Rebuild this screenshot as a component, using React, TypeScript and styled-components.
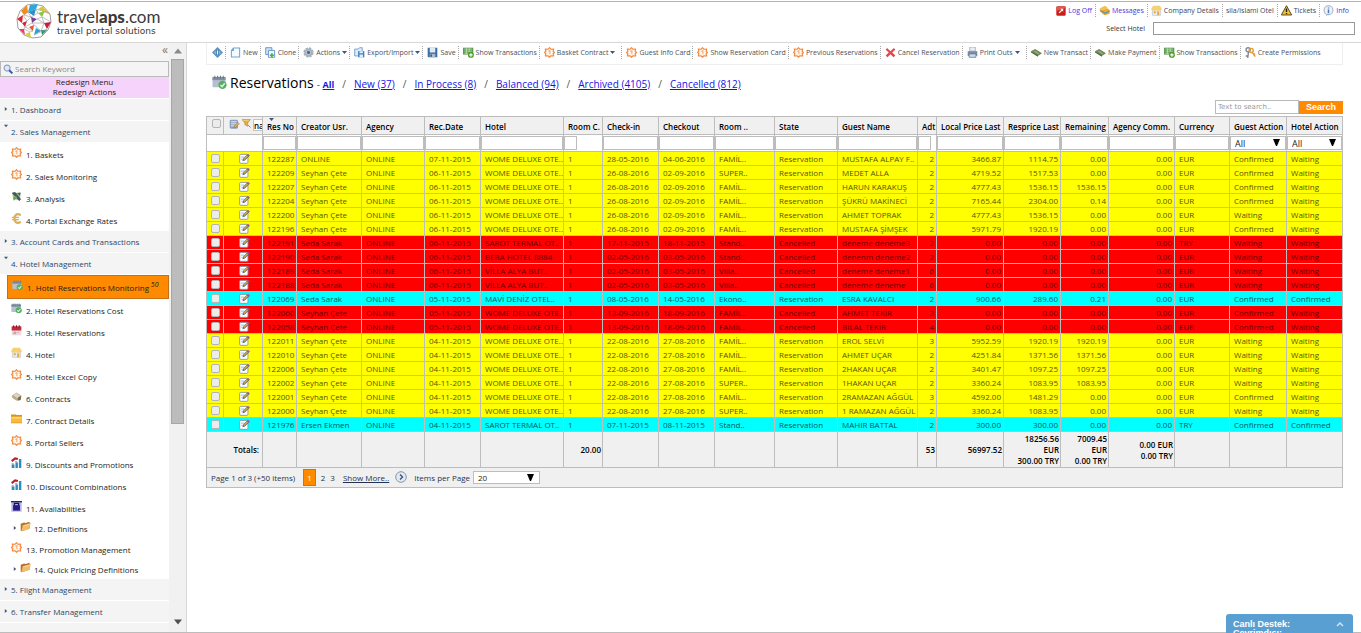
import React from 'react';
import styled, { createGlobalStyle, css } from 'styled-components';

const GlobalStyle = createGlobalStyle`
  * { box-sizing: border-box; }
  html, body, #root { height: 100%; margin: 0; }
  body {
    overflow: hidden;
    background: #fff;
    color: #000;
    font-family: 'Open Sans', 'Noto Sans', sans-serif;
    font-size: 8px;
    line-height: 11px;
  }
  button, input, select { font-family: inherit; margin: 0; }
  button { cursor: pointer; }
`;

/* ---------- icons ---------- */

type IconName =
  | 'gear' | 'analysis' | 'euro' | 'calendar' | 'redCalendar' | 'hotel' | 'contract' | 'folder'
  | 'chart' | 'lock' | 'openFolder' | 'nav' | 'page' | 'clone' | 'cog' | 'export' | 'save'
  | 'transactions' | 'cancel' | 'printer' | 'money' | 'keys' | 'logoff' | 'message' | 'warning'
  | 'info' | 'edit' | 'filter' | 'columns' | 'search';

const drawings: Record<IconName, React.ReactNode> = {
  gear: (
    <g fill="none" stroke="#f58536" strokeWidth="1.5" strokeLinejoin="round">
      <path d="M8 .8 10.200 3.400 14.200 3 13.200 6.200 15.300 8 13.200 9.800 14.200 13 10.200 12.600 8 15.200 5.800 12.600 1.800 13 2.800 9.800 .7 8 2.800 6.200 1.800 3 5.800 3.400Z" fill="#fff6ee" />
      <path d="M6.300 6.200 8.600 5.300V10.600" stroke="#f9a566" />
    </g>
  ),
  analysis: (
    <g>
      <path d="M2 2 14 3 13 13 3 12Z" fill="#8fc77c" />
      <path d="M2 3 6 2 14 12 12 14Z" fill="#4a4f63" stroke="#4a4f63" />
      <path d="M9 3 14 2 13 7Z" fill="#55585f" />
      <path d="M3 10 7 7 9 9 4 14Z" fill="#6aa84f" />
    </g>
  ),
  euro: (
    <g fill="none" stroke="#dcb158" strokeLinecap="round">
      <path d="M13 2.500C8 0 5 4 5 8s3 8 8 5.500" strokeWidth="3.400" />
      <path d="M2 6.500H11M2 9.500H11" strokeWidth="1.800" />
    </g>
  ),
  calendar: (
    <g>
      <rect x="0.500" y="2" width="14" height="11" rx="1" fill="#b4c0ce" />
      <path d="M.5 2H14.500V5.500H.5Z" fill="#8291a3" />
      <path d="M3 .8V4M6 .8V4M9 .8V4M12 .8V4" stroke="#5f6d7c" />
      <circle cx="11.200" cy="10.600" r="4.400" fill="#57ad62" />
      <path d="M9 10.600 10.800 12.400 13.600 8.800" fill="none" stroke="#e3f6e3" strokeWidth="1.500" />
    </g>
  ),
  redCalendar: (
    <g>
      <rect x="1" y="2" width="14" height="13" fill="#e9dede" />
      <path d="M1 2H15V8H1Z" fill="#c22a3c" />
      <path d="M4 .5V4M8 .5V4M12 .5V4" stroke="#8e1525" strokeWidth="1.500" />
      <path d="M4 10H7V13H4ZM9 11H12" fill="#d5a0a5" stroke="#d5a0a5" />
    </g>
  ),
  hotel: (
    <g>
      <path d="M2 7H14V15H2Z" fill="#e9eef5" stroke="#b8c4d4" />
      <path d="M0 6 3 1H13L16 6 14 8H2Z" fill="#f7d070" />
      <path d="M4 9H7V12H4ZM9 9H12V15H9Z" fill="#e7a84a" />
    </g>
  ),
  contract: (
    <g>
      <path d="M1 7 8 2 15 7 14 12 8 14 2 10Z" fill="#b9aa90" />
      <path d="M3 6 8 3 13 7 9 10Z" fill="#ded4c0" />
      <path d="M10 10 15 7 14 13 10 14Z" fill="#77694f" />
    </g>
  ),
  folder: (
    <g>
      <path d="M0 2H7L8 3H16V15H0Z" fill="#d9931d" />
      <path d="M0 5H16V14H0Z" fill="#fbb93a" />
      <path d="M1 6H15V8H1Z" fill="#ffdc85" />
    </g>
  ),
  chart: (
    <g>
      <path d="M1 11H5V16H1ZM6.500 8H10V16H6.500ZM11.500 3H15V16H11.500Z" fill="#2c8dc0" />
      <path d="M1 6 6 2 10 3" fill="none" stroke="#b6202b" strokeWidth="3" />
      <path d="M1 10H4M6 7H9" stroke="#8a3544" />
    </g>
  ),
  lock: (
    <g>
      <rect x=".5" y=".5" width="15" height="15" fill="#b8b5dc" />
      <rect x="3" y="6" width="10" height="8" fill="#261a8c" />
      <path d="M5 6V3.500H11V6" fill="none" stroke="#15105c" strokeWidth="2" />
      <path d="M0 1H16" stroke="#2a2170" strokeWidth="2" />
    </g>
  ),
  openFolder: (
    <g>
      <path d="M1 4 6 2 8 3 14 1V11L3 15 1 14Z" fill="#b9742a" />
      <path d="M4 6 16 3 13 12 2 15Z" fill="#f0bd6c" />
      <path d="M5 7 14 5" stroke="#fbe2b4" />
    </g>
  ),
  nav: (
    <g>
      <path d="M8 0 16 8 8 16 0 8Z" fill="#5b8fbd" />
      <path d="M8 2.500 13.500 8 8 13.500 2.500 8Z" fill="#86b1d6" />
      <path d="M6.500 4H9.500V12H6.500Z" fill="#2d5f92" />
      <path d="M8 5V11" stroke="#fff" strokeWidth="1.400" />
    </g>
  ),
  page: <path d="M5 1.500H14V14.500H2V5ZM5 1.500V5H2" fill="#f5fafe" stroke="#6fa5d6" strokeWidth="1.500" />,
  clone: (
    <g strokeWidth="1.300">
      <path d="M1 1H10V11H1Z" fill="#cfe3f4" stroke="#5b93c6" />
      <path d="M5 5H14V15H5Z" fill="#f2f8fd" stroke="#5b93c6" />
      <path d="M7 12H13M10 9V15" stroke="#4caf50" strokeWidth="2.500" />
    </g>
  ),
  cog: (
    <g fill="none">
      <circle cx="8" cy="8" r="6" stroke="#a6b0bd" strokeWidth="3" strokeDasharray="3.200 1.500" />
      <circle cx="8" cy="8" r="4.500" stroke="#a4afbd" strokeWidth="3" />
      <circle cx="8" cy="8" r="2.400" fill="#4a658c" />
    </g>
  ),
  export: (
    <g>
      <path d="M1 3H6L8 1H12V13H1Z" fill="#dcebf8" stroke="#4d85bd" />
      <rect x="6" y="6" width="9" height="9" fill="#3f7fc0" />
      <path d="M8 6H13V9H8ZM8 11H13V15H8Z" fill="#e3eef8" />
    </g>
  ),
  save: (
    <g>
      <path d="M1 1H15V15H2L1 14Z" fill="#3c6da0" />
      <path d="M4 1H12V8H4Z" fill="#dfeaf4" />
      <path d="M4 10H12V15H4Z" fill="#a9bccf" />
      <path d="M5 11H7V14H5Z" fill="#2b4766" />
    </g>
  ),
  transactions: (
    <g>
      <path d="M0 1H15V11H0Z" fill="#5d9a54" />
      <path d="M2 3H13M2 6H13M2 9H8M5 2V10M9 2V7" stroke="#c4e2bb" strokeWidth="1.100" />
      <circle cx="11.500" cy="11.500" r="4.300" fill="#4b9f25" />
      <path d="M9 11.500H14M11.500 9V14" stroke="#fff" strokeWidth="1.600" />
    </g>
  ),
  cancel: <path d="M3 1.500 8 6 13 1.500 15 4 10.500 8 15 12.500 12.500 15 8 10.500 3.500 15 1 12.500 5.500 8 1 4Z" fill="#e8474a" />,
  printer: (
    <g>
      <path d="M4 0H12V6H4Z" fill="#e8eff6" stroke="#8c9aab" />
      <path d="M1 6H15V13H1Z" fill="#7d8da1" />
      <path d="M3 10H13V15H3Z" fill="#c9dcee" stroke="#5c6b7e" />
    </g>
  ),
  money: (
    <g>
      <path d="M0 6 6 3 16 9 10 13Z" fill="#6f8a58" />
      <path d="M0 6 10 12V14L0 8Z" fill="#4c6438" />
      <path d="M5 6 11 10" stroke="#a8bd90" strokeWidth="1.500" />
    </g>
  ),
  keys: (
    <g fill="none">
      <circle cx="4.500" cy="4" r="3" stroke="#7f8791" strokeWidth="2" />
      <path d="M5 7 4 16M4 13H1" stroke="#7f8791" strokeWidth="2" />
      <circle cx="9" cy="5" r="3" stroke="#e59b2d" strokeWidth="2" />
      <path d="M10 7 15 14M12 12 14.500 9.500" stroke="#e59b2d" strokeWidth="2" />
    </g>
  ),
  logoff: (
    <g>
      <rect x="0.500" y="0.500" width="15" height="15" rx="2" fill="#c9201c" />
      <path d="M.5 8 15.500 3A2.500 2.500 0 0 0 13 .5H3A2.500 2.500 0 0 0 .5 3Z" fill="#dd5a50" />
      <path d="M5 11 10 6" stroke="#fff" strokeWidth="1.800" />
      <path d="M7 4.500H11.500V9Z" fill="#fff" />
    </g>
  ),
  message: (
    <g>
      <path d="M1 5 8 1 12 3V9L5 12 1 9Z" fill="#f3c352" />
      <path d="M4 8 13 5 16 8 15 13 8 15 4 12Z" fill="#eeaa28" />
      <path d="M2 8 9 12 15 9" stroke="#5f8fc4" strokeWidth="2" fill="none" />
    </g>
  ),
  warning: (
    <g>
      <path d="M8 1 15.500 14.500H.5Z" fill="#f1c232" stroke="#4a4531" strokeWidth="1.400" />
      <path d="M8 5V10M8 11.500V13" stroke="#1c1c1c" strokeWidth="2" />
    </g>
  ),
  info: (
    <g>
      <circle cx="8" cy="7.500" r="6.500" fill="#eff3f8" stroke="#a1b1c5" strokeWidth="1.500" />
      <path d="M8 3.500V5M8 6.500V12" stroke="#4479bb" strokeWidth="2.200" />
      <path d="M5 13 4 16 8 14" fill="#a1b1c5" />
    </g>
  ),
  edit: (
    <g>
      <rect x="1" y="2" width="12" height="13" rx="1.500" fill="#fff" stroke="#8894a8" strokeWidth="1.300" />
      <path d="M3 6H8M3 9H6" stroke="#a9c6ee" strokeWidth="1.500" />
      <path d="M5 12 6 8.500 12 2 15 4.500 8.500 11Z" fill="#56617a" />
      <path d="M7 9.500 12.500 4" stroke="#e0b340" strokeWidth="1.600" />
      <path d="M12 2 13 1 16 3.500 15 4.500Z" fill="#b3459b" />
    </g>
  ),
  filter: (
    <g>
      <path d="M0 1H15L10 7V13L5 10V7Z" fill="#e8ac3c" stroke="#b98328" />
      <path d="M2 2.500H12" stroke="#ffe6a8" />
      <path d="M11 11 15 15" stroke="#777" strokeWidth="1.500" />
    </g>
  ),
  columns: (
    <g>
      <rect x="1" y="1" width="12" height="13" rx="2" fill="#8d9fc0" />
      <path d="M3 4H11M3 7H11M3 10H8" stroke="#e8eefa" strokeWidth="1.400" />
      <path d="M7 13 8 10 13 5 15 7 10 12Z" fill="#e5b24e" stroke="#775b25" strokeWidth=".6" />
    </g>
  ),
  search: (
    <g fill="none">
      <circle cx="6.500" cy="6.500" r="4.800" fill="#dbe8fa" stroke="#90a2c4" strokeWidth="1.800" />
      <path d="M10 10 15 15" stroke="#3450a4" strokeWidth="3" />
    </g>
  ),
};

const IconSvg = styled.svg`
  display: block;
  flex: none;
`;

const Icon = ({ name, size = 11 }: { name: IconName; size?: number }) => (
  <IconSvg width={size} height={size} viewBox="0 0 16 16" aria-hidden="true">
    {drawings[name]}
  </IconSvg>
);

/* ---------- page frame ---------- */

const Page = styled.div`
  display: flex;
  flex-direction: column;
  height: 100vh;
  border-top: 1px solid #fff;
  border-bottom: 1px solid #bcbcbc;
`;

const Header = styled.header`
  display: flex;
  justify-content: space-between;
  flex: none;
  height: 42px;
  border-top: 1px solid #b4b4b4;
  border-bottom: 1px solid #d8d8d8;
`;

const Brand = styled.a`
  display: flex;
  align-items: center;
  gap: 5px;
  padding: 0 0 2px 16px;
  color: #3a3a3c;
  text-decoration: none;
`;

const BrandText = styled.span`
  display: flex;
  flex-direction: column;
`;

const BrandName = styled.span`
  font: 17px/19px Lato, sans-serif;
  b { font-weight: 900; }
`;

const BrandTag = styled.span`
  font: 9px/10px 'DejaVu Sans', sans-serif;
`;

const Tools = styled.div`
  display: flex;
  flex-direction: column;
  align-items: flex-end;
  gap: 5px;
  padding: 2px 6px 0 0;
`;

const TopLinks = styled.nav`
  display: flex;
  padding-right: 3px;
`;

const TopLink = styled.a<{ $blue?: boolean }>`
  display: flex;
  align-items: center;
  gap: 2px;
  height: 13px;
  padding: 0 3px;
  font-size: 7px;
  text-decoration: none;
  color: ${(p) => (p.$blue ? '#4a35e0' : '#3c4358')};
  & + & { border-left: 1px dotted #a8a8a8; }
`;

const HotelPicker = styled.label`
  display: flex;
  align-items: center;
  gap: 8px;
  font-size: 7px;
  color: #333;
`;

const HotelInput = styled.input`
  width: 202px;
  height: 13px;
  padding: 0 3px;
  border: 1px solid #999;
  font-size: 8px;
`;

const Body = styled.div`
  display: flex;
  flex: 1;
  min-height: 0;
`;

/* ---------- side menu ---------- */

const Sidebar = styled.aside`
  display: flex;
  flex: none;
  width: 187px;
  border-right: 1px solid #d8d8d8;
  background: #f4f4f4;
`;

const Menu = styled.nav`
  flex: 1;
  overflow: hidden;
`;

const CollapseRow = styled.div`
  display: flex;
  justify-content: flex-end;
  align-items: center;
  height: 18px;
`;

const CollapseButton = styled.button`
  height: 18px;
  padding: 0 1px 4px;
  border: 0;
  background: none;
  color: #777;
  font-size: 12px;
  line-height: 14px;
`;

const MenuSearch = styled.label`
  display: flex;
  align-items: center;
  gap: 2px;
  height: 16px;
  padding-left: 2px;
  border: 1px solid #b9b9b9;
  input {
    flex: 1;
    min-width: 0;
    height: 14px;
    padding: 0 0 2px;
    border: 0;
    background: none;
    outline: 0;
    font-size: 8px;
  }
  input::placeholder { color: #8a8a8a; }
`;

const Redesign = styled.div`
  display: flex;
  flex-direction: column;
  align-items: center;
  height: 22px;
  border-bottom: 1px solid #fff;
  background: #f6d3fa;
  line-height: 10px;
  a { color: #222; text-decoration: none; }
`;

const GroupTitle = styled.a<{ $open?: boolean }>`
  display: flex;
  align-items: center;
  gap: 3px;
  height: 22px;
  padding: 0 0 1px 4px;
  border-bottom: 1px solid #fff;
  color: #2e4766;
  text-decoration: none;
  svg { ${(p) => p.$open && css`align-self: flex-start; margin-top: 3px;`} }
`;

const List = styled.ul`
  margin: 0;
  padding: 0;
  list-style: none;
  background: #fff;
`;

const Item = styled.a<{ $nested?: boolean; $active?: boolean }>`
  display: flex;
  align-items: center;
  gap: 4px;
  height: ${(p) => (p.$active ? 24 : p.$nested ? 19 : 22)}px;
  margin-left: 7px;
  padding-left: ${(p) => (p.$nested ? 6 : 4)}px;
  color: #1c1c1c;
  text-decoration: none;
  ${(p) => p.$active && css`
    border: 1px solid #c4701a;
    background: #ff8a00;
  `}
  > span { padding-top: ${(p) => (p.$nested ? 0 : 1)}px; }
  > svg { margin-bottom: 4px; }
  ${(p) => p.$nested && css`
    gap: 3px;
    > svg:first-child { margin-bottom: 1px; }
  `}
  sup { font-size: 7px; font-style: italic; line-height: 0; }
`;

const Track = styled.div`
  display: flex;
  flex-direction: column;
  flex: none;
  align-items: center;
  width: 17px;
  background: #f1f1f1;
`;

const Thumb = styled.div`
  flex: 0 0 62%;
  width: 13px;
  border: 1px solid #a6a6a6;
  background: #bcbcbc;
`;

const TrackButton = styled.button<{ $last?: boolean }>`
  display: flex;
  align-items: center;
  justify-content: center;
  flex: none;
  width: 17px;
  height: ${(p) => (p.$last ? 20 : 16)}px;
  margin-top: ${(p) => (p.$last ? 'auto' : 0)};
  padding: 0;
  border: 0;
  background: none;
`;

const Caret = ({ dir = 'right', width = 5, color = '#42567a' }: { dir?: 'right' | 'down' | 'up'; width?: number; color?: string }) => {
  const shapes = { right: 'M2 0 8 5 2 10Z', down: 'M0 2H10L5 8Z', up: 'M0 8H10L5 2Z' };
  return (
    <IconSvg width={width} height={width} viewBox="0 0 10 10" aria-hidden="true">
      <path d={shapes[dir]} fill={color} />
    </IconSvg>
  );
};

const SelectArrow = () => (
  <IconSvg width="7" height="7" viewBox="0 0 7 7" aria-hidden="true">
    <path d="M0 0H7L4 7H3Z" fill="#000" />
  </IconSvg>
);

interface MenuEntry { text: string; icon: IconName; nested?: boolean; active?: boolean }
interface MenuGroup { text: string; items?: MenuEntry[] }

const menu: MenuGroup[] = [
  { text: '1. Dashboard' },
  {
    text: '2. Sales Management',
    items: [
      { text: '1. Baskets', icon: 'gear' },
      { text: '2. Sales Monitoring', icon: 'gear' },
      { text: '3. Analysis', icon: 'analysis' },
      { text: '4. Portal Exchange Rates', icon: 'euro' },
    ],
  },
  { text: '3. Account Cards and Transactions' },
  {
    text: '4. Hotel Management',
    items: [
      { text: '1. Hotel Reservations Monitoring', icon: 'calendar', active: true },
      { text: '2. Hotel Reservations Cost', icon: 'calendar' },
      { text: '3. Hotel Reservations', icon: 'redCalendar' },
      { text: '4. Hotel', icon: 'hotel' },
      { text: '5. Hotel Excel Copy', icon: 'gear' },
      { text: '6. Contracts', icon: 'contract' },
      { text: '7. Contract Details', icon: 'folder' },
      { text: '8. Portal Sellers', icon: 'gear' },
      { text: '9. Discounts and Promotions', icon: 'chart' },
      { text: '10. Discount Combinations', icon: 'chart' },
      { text: '11. Availabilities', icon: 'lock' },
      { text: '12. Definitions', icon: 'openFolder', nested: true },
      { text: '13. Promotion Management', icon: 'gear' },
      { text: '14. Quick Pricing Definitions', icon: 'openFolder', nested: true },
    ],
  },
  { text: '5. Flight Management' },
  { text: '6. Transfer Management' },
];

/* ---------- main area ---------- */

const Main = styled.main`
  flex: 1;
  min-width: 0;
  padding: 0 18px 0 19px;
`;

const Toolbar = styled.div`
  display: flex;
  align-items: center;
  height: 22px;
  padding: 0 0 2px 1px;
  border: 1px solid #efefef;
  border-top: 0;
`;

const ToolButton = styled.button<{ $roomy?: boolean }>`
  display: flex;
  align-items: center;
  gap: 2px;
  flex: none;
  height: 13px;
  padding: 0 ${(p) => (p.$roomy ? 6 : 2)}px 0 4px;
  border: 0;
  background: none;
  color: #4b4f58;
  font-size: 7px;
  white-space: nowrap;
  & + & { border-left: 1px dotted #a8a8a8; }
`;

const TitleRow = styled.div`
  display: flex;
  align-items: center;
  height: 35px;
  padding-left: 6px;
`;

const Title = styled.h1`
  margin: 0 3px 0 3px;
  font-size: 14px;
  line-height: 20px;
  font-weight: 400;
`;

const Views = styled.nav`
  display: flex;
  gap: 8px;
  padding-top: 3px;
  font-size: 10px;
  line-height: 13px;
  color: #555;
  a { color: #1414e6; }
  b { font-size: 9px; }
`;

const SearchBar = styled.form`
  display: flex;
  justify-content: flex-end;
  align-items: flex-end;
  height: 14px;
  margin-bottom: 2px;
  input {
    width: 84px;
    height: 14px;
    padding: 0 2px;
    border: 1px solid #b9b9b9;
    font: 7px 'DejaVu Sans', sans-serif;
  }
  input::placeholder { color: #999; }
  button {
    width: 44px;
    height: 13px;
    padding: 0;
    border: 0;
    background: #ff8a00;
    color: #fff;
    font: bold 9px/13px 'Liberation Sans', sans-serif;
  }
`;

const line = '#bdbdbd';

const Grid = styled.table`
  width: 100%;
  table-layout: fixed;
  border-collapse: separate;
  border-spacing: 0;
  border-top: 1px solid ${line};
  border-left: 1px solid ${line};
`;

const HeadCell = styled.th<{ $tools?: boolean }>`
  position: relative;
  height: 18px;
  padding: ${(p) => (p.$tools ? '2px 0 0 5px' : '1px 0 0 4px')};
  overflow: hidden;
  border-right: 1px solid ${line};
  border-bottom: 1px solid ${line};
  background: #f0f0f0;
  font-size: 8px;
  font-weight: 600;
  line-height: 11px;
  text-align: left;
  vertical-align: ${(p) => (p.$tools ? 'top' : 'middle')};
  white-space: nowrap;
`;

const SortMark = styled.span`
  position: absolute;
  top: 0;
  left: 6px;
`;

const HeadTools = styled.div`
  display: flex;
  align-items: flex-start;
  gap: 2px;
`;

const TinyField = styled.input`
  flex: none;
  width: 12px;
  height: 12px;
  padding: 0;
  border: 1px solid #c4c4c4;
  background: #fff;
  font-size: 8px;
  font-weight: 600;
`;

const FilterCell = styled.td`
  height: 17px;
  padding: 1px 0;
  border-right: 1px solid ${line};
  border-bottom: 1px solid ${line};
  vertical-align: top;
`;

const FilterInput = styled.input<{ $short?: boolean }>`
  display: block;
  width: ${(p) => (p.$short ? '13px' : '100%')};
  height: 14px;
  padding: 0 2px;
  border: 1px solid ${line};
  font-size: 8px;
`;

const SelectBox = styled.span<{ $wide?: boolean }>`
  position: relative;
  display: block;
  width: ${(p) => (p.$wide ? '67px' : '100%')};
  select {
    display: block;
    appearance: none;
    width: 100%;
    height: ${(p) => (p.$wide ? 13 : 14)}px;
    padding: 0 4px;
    border: 1px solid ${line};
    border-radius: 0;
    background: #fff;
    color: #222;
    font-size: ${(p) => (p.$wide ? 8 : 9)}px;
    line-height: 11px;
  }
  svg {
    position: absolute;
    top: 3px;
    right: 6px;
    pointer-events: none;
  }
`;

const tones = { y: '#ffff00', r: '#ff0000', c: '#00ffff' };
type Tone = keyof typeof tones;

const DataRow = styled.tr<{ $tone: Tone }>`
  background: ${(p) => tones[p.$tone]};
  color: ${(p) => (p.$tone === 'r' ? '#660000' : p.$tone === 'c' ? '#005a5a' : '#565600')};
`;

const Cell = styled.td<{ $right?: boolean }>`
  height: 14px;
  padding: ${(p) => (p.$right ? '0 2px 1px 0' : '0 0 1px 4px')};
  overflow: hidden;
  border-right: 1px solid ${line};
  border-bottom: 1px solid ${line};
  font-size: 8px;
  line-height: 11px;
  text-align: ${(p) => (p.$right ? 'right' : 'left')};
  white-space: nowrap;
`;

const IconCell = styled(Cell)`
  padding: 0 0 0 15px;
`;

const Check = styled.input`
  appearance: none;
  display: block;
  width: 9px;
  height: 9px;
  border: 1px solid #b5b5b5;
  border-radius: 2px;
  background: #ececec;
`;

const TotalCell = styled.td<{ $label?: boolean }>`
  height: 36px;
  padding: 0 ${(p) => (p.$label ? 3 : 1)}px 0 0;
  border-right: 1px solid ${line};
  border-bottom: 1px solid ${line};
  background: #f0f0f0;
  font-size: 8px;
  font-weight: 600;
  line-height: 11px;
  text-align: right;
  div { white-space: nowrap; }
`;

const Pager = styled.div`
  display: flex;
  align-items: center;
  height: 20px;
  padding: 0 0 1px 4px;
  border: 1px solid ${line};
  border-top: 0;
  background: #f0f0f0;
  color: #24344f;
  a { color: #24344f; }
`;

const PageLink = styled.a<{ $current?: boolean }>`
  padding: ${(p) => (p.$current ? '2px 3px' : '0')};
  margin-left: 5px;
  text-decoration: none;
  ${(p) => p.$current && css`
    && { color: #fff; }
    margin-left: 8px;
    border: 1px solid #c9761a;
    background: #ff8a00;
  `}
`;

const MoreLink = styled.a`
  margin-left: 8px;
`;

const NextButton = styled.button`
  display: flex;
  margin: 0 7px 0 6px;
  padding: 0;
  border: 0;
  background: none;
`;

const PageSize = styled.label`
  display: flex;
  align-items: center;
  gap: 3px;
`;

const Chat = styled.button`
  position: fixed;
  right: 8px;
  bottom: 0;
  display: flex;
  justify-content: space-between;
  width: 127px;
  height: 19px;
  padding: 6px 9px 0 7px;
  overflow: hidden;
  border: 0;
  border-radius: 3px 3px 0 0;
  background: #5a9fd2;
  color: #fff;
  font: bold 9px/9px 'Liberation Sans', sans-serif;
  text-align: left;
  span { display: block; }
`;

/* ---------- data ---------- */

const tools: { text?: string; icon: IconName; menu?: boolean; roomy?: boolean }[] = [
  { icon: 'nav' },
  { text: 'New', icon: 'page' },
  { text: 'Clone', icon: 'clone' },
  { text: 'Actions', icon: 'cog', menu: true },
  { text: 'Export/Import', icon: 'export', menu: true },
  { text: 'Save', icon: 'save' },
  { text: 'Show Transactions', icon: 'transactions' },
  { text: 'Basket Contract', icon: 'gear', menu: true, roomy: true },
  { text: 'Guest Info Card', icon: 'gear' },
  { text: 'Show Reservation Card', icon: 'gear' },
  { text: 'Previous Reservations', icon: 'gear' },
  { text: 'Cancel Reservation', icon: 'cancel' },
  { text: 'Print Outs', icon: 'printer', menu: true, roomy: true },
  { text: 'New Transact', icon: 'money' },
  { text: 'Make Payment', icon: 'money' },
  { text: 'Show Transactions', icon: 'transactions' },
  { text: 'Create Permissions', icon: 'keys' },
];

const views = ['New (37)', 'In Process (8)', 'Balanced (94)', 'Archived (4105)', 'Cancelled (812)'];

const columns: { title: string; width: number; right?: boolean; filter?: 'short' | 'select' }[] = [
  { title: 'Res No', width: 34 },
  { title: 'Creator Usr.', width: 65 },
  { title: 'Agency', width: 63 },
  { title: 'Rec.Date', width: 56 },
  { title: 'Hotel', width: 83 },
  { title: 'Room C.', width: 39, filter: 'short' },
  { title: 'Check-in', width: 56 },
  { title: 'Checkout', width: 56 },
  { title: 'Room ..', width: 60 },
  { title: 'State', width: 63 },
  { title: 'Guest Name', width: 80 },
  { title: 'Adt', width: 19, right: true, filter: 'short' },
  { title: 'Local Price Last', width: 67, right: true },
  { title: 'Resprice Last', width: 57, right: true },
  { title: 'Remaining', width: 48, right: true },
  { title: 'Agency Comm.', width: 66, right: true },
  { title: 'Currency', width: 55 },
  { title: 'Guest Action', width: 57, filter: 'select' },
  { title: 'Hotel Action', width: 56, filter: 'select' },
];

const W = 'WOME DELUXE OTE..';
const S = 'Seyhan Çete';
const D = 'Seda Sarak';

type Row = [Tone, string, string, string, string, string, string, string, string, string, string, string, string, string, string, string];

/* tone, number, creator, recorded, hotel, in, out, room, guest, adults, local, price, remaining, currency, guest action, hotel action */
const rows: Row[] = [
  ['y', '122287', 'ONLINE', '07-11-2015', W, '28-05-2016', '04-06-2016', 'FAMİL..', 'MUSTAFA ALPAY F..', '2', '3466.87', '1114.75', '0.00', 'EUR', 'Confirmed', 'Waiting'],
  ['y', '122209', S, '06-11-2015', W, '26-08-2016', '02-09-2016', 'SUPER..', 'MEDET ALLA', '2', '4719.52', '1517.53', '0.00', 'EUR', 'Confirmed', 'Waiting'],
  ['y', '122207', S, '06-11-2015', W, '26-08-2016', '02-09-2016', 'FAMİL..', 'HARUN KARAKUŞ', '2', '4777.43', '1536.15', '1536.15', 'EUR', 'Confirmed', 'Waiting'],
  ['y', '122204', S, '06-11-2015', W, '26-08-2016', '02-09-2016', 'FAMİL..', 'ŞÜKRÜ MAKİNECİ', '2', '7165.44', '2304.00', '0.14', 'EUR', 'Confirmed', 'Waiting'],
  ['y', '122200', S, '06-11-2015', W, '26-08-2016', '02-09-2016', 'FAMİL..', 'AHMET TOPRAK', '2', '4777.43', '1536.15', '0.00', 'EUR', 'Waiting', 'Waiting'],
  ['y', '122196', S, '06-11-2015', W, '26-08-2016', '02-09-2016', 'FAMİL..', 'MUSTAFA ŞİMŞEK', '2', '5971.79', '1920.19', '0.00', 'EUR', 'Confirmed', 'Waiting'],
  ['r', '122191', D, '06-11-2015', 'SAROT TERMAL OT..', '17-11-2015', '18-11-2015', 'Stand..', 'deneme deneme3', '2', '0.00', '0.00', '0.00', 'TRY', 'Waiting', 'Waiting'],
  ['r', '122190', D, '06-11-2015', 'BERA HOTEL 8884', '02-05-2016', '03-05-2016', 'Stand..', 'denenm deneme2', '2', '0.00', '0.00', '0.00', 'EUR', 'Waiting', 'Waiting'],
  ['r', '122189', D, '06-11-2015', 'VİLLA ALYA BUT..', '02-05-2016', '03-05-2016', 'Villa..', 'deneme deneme1', '6', '0.00', '0.00', '0.00', 'EUR', 'Waiting', 'Waiting'],
  ['r', '122188', D, '06-11-2015', 'VİLLA ALYA BUT..', '02-05-2016', '03-05-2016', 'Villa..', 'deneme deneme', '6', '0.00', '0.00', '0.00', 'EUR', 'Waiting', 'Waiting'],
  ['c', '122069', D, '05-11-2015', 'MAVİ DENİZ OTEL..', '08-05-2016', '14-05-2016', 'Ekono..', 'ESRA KAVALCI', '2', '900.66', '289.60', '0.21', 'EUR', 'Confirmed', 'Confirmed'],
  ['r', '122060', S, '05-11-2015', W, '13-09-2016', '18-09-2016', 'FAMİL..', 'AHMET TEKİR', '3', '0.00', '0.00', '0.00', 'EUR', 'Confirmed', 'Waiting'],
  ['r', '122058', S, '05-11-2015', W, '13-09-2016', '18-09-2016', 'FAMİL..', 'BİLAL TEKİR', '4', '0.00', '0.00', '0.00', 'EUR', 'Confirmed', 'Waiting'],
  ['y', '122011', S, '04-11-2015', W, '22-08-2016', '27-08-2016', 'FAMİL..', 'EROL SELVİ', '3', '5952.59', '1920.19', '1920.19', 'EUR', 'Waiting', 'Waiting'],
  ['y', '122010', S, '04-11-2015', W, '22-08-2016', '27-08-2016', 'FAMİL..', 'AHMET UÇAR', '2', '4251.84', '1371.56', '1371.56', 'EUR', 'Waiting', 'Waiting'],
  ['y', '122006', S, '04-11-2015', W, '22-08-2016', '27-08-2016', 'FAMİL..', '2HAKAN UÇAR', '2', '3401.47', '1097.25', '1097.25', 'EUR', 'Waiting', 'Waiting'],
  ['y', '122002', S, '04-11-2015', W, '22-08-2016', '27-08-2016', 'SUPER..', '1HAKAN UÇAR', '2', '3360.24', '1083.95', '1083.95', 'EUR', 'Waiting', 'Waiting'],
  ['y', '122001', S, '04-11-2015', W, '22-08-2016', '27-08-2016', 'FAMİL..', '2RAMAZAN AĞGÜL', '3', '4592.00', '1481.29', '0.00', 'EUR', 'Confirmed', 'Waiting'],
  ['y', '122000', S, '04-11-2015', W, '22-08-2016', '27-08-2016', 'SUPER..', '1 RAMAZAN AĞGÜL', '2', '3360.24', '1083.95', '0.00', 'EUR', 'Waiting', 'Waiting'],
  ['c', '121976', 'Ersen Ekmen', '04-11-2015', 'SAROT TERMAL OT..', '07-11-2015', '08-11-2015', 'Stand..', 'MAHIR BATTAL', '2', '300.00', '300.00', '0.00', 'TRY', 'Confirmed', 'Confirmed'],
];

const totals: string[][] = [
  [], [], [], [], [], ['20.00'], [], [], [], [], [], ['53'], ['56997.52'],
  ['18256.56', 'EUR', '300.00 TRY'], ['7009.45', 'EUR', '0.00 TRY'], ['0.00 EUR', '0.00 TRY'], [], [], [],
];

const toCells = (r: Row): string[] => [
  r[1], r[2], 'ONLINE', r[3], r[4], '1', r[5], r[6], r[7],
  r[0] === 'r' ? 'Cancelled' : 'Reservation',
  r[8], r[9], r[10], r[11], r[12], '0.00', r[13], r[14], r[15],
];

/* ---------- pieces ---------- */

const Globe = () => (
  <IconSvg width="36" height="36" viewBox="0 0 36 36" aria-hidden="true">
    <path d="M18 1 27 3 34 11 35 19 32 27 25 34 16 35 8 32 2 25 1 16 4 8 11 2Z" fill="#fff" stroke="#777" strokeWidth=".7" />
    <path d="M14 2 22 1 20 6 12 9Z" fill="#29a9e0" />
    <path d="M12 9 20 6 18 13Z" fill="#2d8fc4" />
    <path d="M22 6 27 3 29 9Z" fill="#c8cf35" />
    <path d="M5 8 11 2 12 9 8 12Z" fill="#f58b1f" />
    <path d="M22 10 29 8 26 14Z" fill="#8cc63f" />
    <path d="M27 4 34 11 29 9Z" fill="#f6b12a" />
    <path d="M1 16 7 12 6 20Z" fill="#e0262d" />
    <path d="M6 20 11 18 9 24Z" fill="#d4213c" />
    <path d="M15 14 21 16 16 20Z" fill="#7b3f98" />
    <path d="M28 20 35 19 31 26Z" fill="#c31f3d" />
    <path d="M20 25 25 28 18 32Z" fill="#22a3dc" />
    <path d="M25 27 31 27 26 32Z" fill="#1f9a75" />
    <path d="M13 24 18 22 17 28Z" fill="#e8582a" />
    <path d="M3 26 8 26 9 32Z" fill="#ef3a63" />
    <path d="M9 31 14 29 15 35Z" fill="#d9d032" />
    <path d="M12 9 8 12 15 14 12 9M20 6 29 9 34 11M20 6 22 10 15 14 11 18 7 12M26 14 21 16 28 20 26 14 35 19M16 20 28 20 25 28 16 20 9 24 17 28 14 29 8 26 9 24M18 32 31 26 25 34" fill="none" stroke="#999" strokeWidth=".6" />
  </IconSvg>
);

const SideMenu = () => (
  <Sidebar>
    <Menu>
      <CollapseRow><CollapseButton aria-label="Collapse menu">«</CollapseButton></CollapseRow>
      <MenuSearch>
        <Icon name="search" size={10} />
        <input placeholder="Search Keyword" aria-label="Search Keyword" />
      </MenuSearch>
      <Redesign>
        <a href="#menu">Redesign Menu</a>
        <a href="#actions">Redesign Actions</a>
      </Redesign>
      {menu.map((g) => (
        <React.Fragment key={g.text}>
          <GroupTitle href="#group" $open={!!g.items}>
            <Caret dir={g.items ? 'down' : 'right'} width={4} />
            {g.text}
          </GroupTitle>
          {g.items && (
            <List>
              {g.items.map((i) => (
                <li key={i.text}>
                  <Item href="#item" $nested={i.nested} $active={i.active}>
                    {i.nested && <Caret width={4} />}
                    <Icon name={i.icon} />
                    <span>{i.text}{i.active && <sup> 50</sup>}</span>
                  </Item>
                </li>
              ))}
            </List>
          )}
        </React.Fragment>
      ))}
    </Menu>
    <Track>
      <TrackButton aria-label="Scroll up"><Caret dir="up" width={8} color="#8a8a8a" /></TrackButton>
      <Thumb />
      <TrackButton $last aria-label="Scroll down"><Caret dir="down" width={8} color="#505050" /></TrackButton>
    </Track>
  </Sidebar>
);

const Reservations = () => (
  <Grid>
    <colgroup>
      <col width={17} />
      <col width={39} />
      {columns.map((c, i) => <col key={i} width={c.width} />)}
    </colgroup>
    <thead>
      <tr>
        <HeadCell $tools><Check type="checkbox" aria-label="Select all" /></HeadCell>
        <HeadCell $tools>
          <HeadTools>
            <Icon name="columns" />
            <Icon name="filter" size={9} />
            <TinyField aria-label="Filter name" defaultValue="na" />
          </HeadTools>
        </HeadCell>
        {columns.map((c, i) => (
          <HeadCell key={i}>
            {i === 0 && <SortMark><Caret dir="down" width={5} /></SortMark>}
            {c.title}
          </HeadCell>
        ))}
      </tr>
      <tr>
        <FilterCell colSpan={2} />
        {columns.map((c, i) => (
          <FilterCell key={i}>
            {c.filter === 'select' ? (
              <SelectBox>
                <select aria-label={c.title}><option>All</option></select>
                <SelectArrow />
              </SelectBox>
            ) : (
              <FilterInput $short={c.filter === 'short'} aria-label={c.title} />
            )}
          </FilterCell>
        ))}
      </tr>
    </thead>
    <tbody>
      {rows.map((r) => (
        <DataRow key={r[1]} $tone={r[0]}>
          <Cell><Check type="checkbox" aria-label={`Select ${r[1]}`} /></Cell>
          <IconCell><Icon name="edit" /></IconCell>
          {toCells(r).map((v, i) => <Cell key={i} $right={columns[i].right}>{v}</Cell>)}
        </DataRow>
      ))}
    </tbody>
    <tfoot>
      <tr>
        <TotalCell colSpan={2} $label>Totals:</TotalCell>
        {totals.map((t, i) => (
          <TotalCell key={i}>{t.map((v) => <div key={v}>{v}</div>)}</TotalCell>
        ))}
      </tr>
    </tfoot>
  </Grid>
);

export default function App() {
  return (
    <>
      <GlobalStyle />
      <Page>
        <Header>
          <Brand href="#home">
            <Globe />
            <BrandText>
              <BrandName>travel<b>aps</b>.com</BrandName>
              <BrandTag>travel portal solutions</BrandTag>
            </BrandText>
          </Brand>
          <Tools>
            <TopLinks>
              <TopLink href="#logoff" $blue><Icon name="logoff" size={10} />Log Off</TopLink>
              <TopLink href="#messages" $blue><Icon name="message" />Messages</TopLink>
              <TopLink href="#company"><Icon name="hotel" />Company Details</TopLink>
              <TopLink href="#user">sila/islami Otel</TopLink>
              <TopLink href="#tickets"><Icon name="warning" />Tickets</TopLink>
              <TopLink href="#info" $blue><Icon name="info" />Info</TopLink>
            </TopLinks>
            <HotelPicker>Select Hotel<HotelInput /></HotelPicker>
          </Tools>
        </Header>
        <Body>
          <SideMenu />
          <Main>
            <Toolbar>
              {tools.map((t, i) => (
                <ToolButton key={i} $roomy={t.roomy} aria-label={t.text ?? 'Navigate'}>
                  <Icon name={t.icon} />
                  {t.text}
                  {t.menu && <Caret dir="down" />}
                </ToolButton>
              ))}
            </Toolbar>
            <TitleRow>
              <Icon name="calendar" size={15} />
              <Title>Reservations</Title>
              <Views>
                <span>- <a href="#all"><b>All</b></a></span>
                {views.map((v) => (
                  <React.Fragment key={v}>
                    <span>/</span>
                    <a href="#view">{v}</a>
                  </React.Fragment>
                ))}
              </Views>
            </TitleRow>
            <SearchBar>
              <input placeholder="Text to search.." aria-label="Text to search" />
              <button type="button">Search</button>
            </SearchBar>
            <Reservations />
            <Pager>
              <span>Page 1 of 3 (+50 items)</span>
              <PageLink href="#1" $current>1</PageLink>
              <PageLink href="#2">2</PageLink>
              <PageLink href="#3">3</PageLink>
              <MoreLink href="#more">Show More..</MoreLink>
              <NextButton aria-label="Next page">
                <IconSvg width="12" height="12" viewBox="0 0 12 12" aria-hidden="true">
                  <circle cx="6" cy="6" r="5.300" fill="#e3e9f1" stroke="#8796ab" />
                  <path d="M5 3.500 7.500 6 5 8.500" fill="none" stroke="#3d5478" strokeWidth="1.400" />
                </IconSvg>
              </NextButton>
              <PageSize>
                Items per Page
                <SelectBox $wide>
                  <select><option>20</option></select>
                  <SelectArrow />
                </SelectBox>
              </PageSize>
            </Pager>
          </Main>
        </Body>
      </Page>
      <Chat>
        <span><span>Canlı Destek:</span><span>Çevrimdışı:</span></span>
        <IconSvg width="8" height="8" viewBox="0 0 8 8" aria-hidden="true">
          <path d="M1 6 4 3 7 6" fill="none" stroke="#cfe6f6" strokeWidth="1.500" />
        </IconSvg>
      </Chat>
    </>
  );
}
